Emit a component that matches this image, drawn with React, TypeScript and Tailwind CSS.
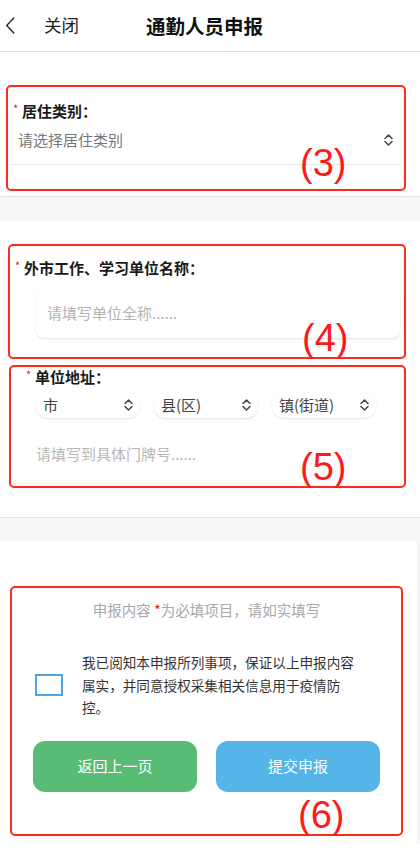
import type {ReactNode} from "react";

const font = {fontFamily: '"Noto Sans CJK SC", "Noto Sans", sans-serif'};

function UpDown({className}: {className?: string}) {
    return (
        <svg viewBox="0 0 11 14" className={className} fill="none" stroke="#444" strokeWidth={1.5}
             strokeLinecap="round" strokeLinejoin="round">
            <path d="M2 5.5 L5.5 2 L9 5.5"/>
            <path d="M2 8.5 L5.5 12 L9 8.5"/>
        </svg>
    );
}

function Mark({children, className}: {children: ReactNode; className: string}) {
    return (
        <span
            className={`absolute text-[38px] leading-none text-[#ff1a1a] ${className}`}
            style={{fontFamily: '"Liberation Sans", Arial, sans-serif'}}>
            {children}
        </span>
    );
}

function Label({children, className}: {children: ReactNode; className?: string}) {
    return (
        <div className={`flex items-start h-[20px] ${className ?? ""}`}>
            <span className="text-[11px] leading-[14px] text-[#e02020] w-[9px]">*</span>
            <span className="text-[15px] leading-[20px] font-bold text-[#1a1a1a]">{children}</span>
        </div>
    );
}

function Pill({text, className}: {text: string; className?: string}) {
    return (
        <div
            className={`flex items-center justify-between w-[104px] h-[26px] pl-[7px] pr-[6px] rounded-xl
            shadow-[0_1px_2px_rgba(0,0,0,0.12)] bg-white ${className ?? ""}`}>
            <span className="text-[15px] text-[#444]">{text}</span>
            <UpDown className="w-[11px] h-[14px]"/>
        </div>
    );
}

export default function App() {
    return (
        <div className="w-[420px] min-h-[866px] bg-white" style={font}>
            {/* header */}
            <div className="flex items-center h-[52px] border-b border-[#e2e2e2]">
                <svg viewBox="0 0 10 18" className="ml-[5px] w-[10px] h-[17px]" fill="none"
                     stroke="#222" strokeWidth={1.4} strokeLinecap="round" strokeLinejoin="round">
                    <path d="M9 1 L1.5 9 L9 17"/>
                </svg>
                <span className="ml-[29px] text-[17.5px] text-[#222]">关闭</span>
                <span className="ml-[67px] text-[19.5px] font-bold text-[#111]">通勤人员申报</span>
            </div>

            {/* section 1 */}
            <div className="pt-[33px] pb-[5px] border-b border-[#e5e5e5]">
                <div className="relative ml-[6px] w-[400px] h-[106px] border-2 border-[#ff2a1a] rounded-[5px]">
                    <Label className="mt-[14px] ml-[5px]">居住类别：</Label>
                    <div className="flex items-center justify-between h-[30px] mt-[4px] ml-[10px] mr-[10px]">
                        <span className="text-[15px] text-[#777]">请选择居住类别</span>
                        <UpDown className="w-[11px] h-[14px]"/>
                    </div>
                    <div className="h-px bg-[#e9e9e9] mt-[9px] mx-[4px]"/>
                    <Mark className="left-[292px] top-[57px]">(3)</Mark>
                </div>
            </div>
            <div className="h-[24px] bg-[#f7f7f7]"/>

            {/* section 2 */}
            <div className="pt-[23px] pb-[29px] border-b border-[#e5e5e5]">
                <div className="relative ml-[8px] w-[398px] h-[115px] border-2 border-[#ff2a1a] rounded-[5px]">
                    <Label className="mt-[12px] ml-[5px]">外市工作、学习单位名称：</Label>
                    <div
                        className="flex items-center h-[50px] mt-[10px] ml-[26px] mr-[4px] pl-[11px] rounded-lg
                        shadow-[0_1px_2px_rgba(0,0,0,0.12)]">
                        <span className="text-[15px] text-[#b3b3b3]">请填写单位全称......</span>
                    </div>
                    <Mark className="left-[292px] top-[73px]">(4)</Mark>
                </div>
                <div className="relative ml-[9px] mt-[6px] w-[397px] h-[123px] border-2 border-[#ff2a1a] rounded-[5px]">
                    <Label className="ml-[15px]">单位地址：</Label>
                    <div className="flex gap-[14px] mt-[5px] ml-[25px]">
                        <Pill text="市"/>
                        <Pill text="县(区)"/>
                        <Pill text="镇(街道)"/>
                    </div>
                    <div className="flex items-center h-[30px] mt-[21px] ml-[25px]">
                        <span className="text-[15px] text-[#b8b8b8]">请填写到具体门牌号......</span>
                    </div>
                    <Mark className="left-[289px] top-[81px]">(5)</Mark>
                </div>
            </div>
            <div className="h-[24px] bg-[#f7f7f7]"/>

            {/* section 3 */}
            <div className="flex bg-[#f7f7f7]">
                <div className="w-[417px] h-[302px] bg-white pt-[44px]">
                    <div className="relative ml-[10px] w-[393px] h-[250px] border-2 border-[#ff2a1a] rounded-[5px]">
                        <div className="mt-[12px] text-center text-[14.5px] leading-[20px] text-[#a8a8a8]">
                            申报内容 <span className="text-[#e02020]">*</span>为必填项目，请如实填写
                        </div>
                        <div className="flex items-center mt-[31px] ml-[23px]">
                            <div className="w-[28px] h-[22px] border-2 border-[#4fa3e8] bg-white shrink-0"/>
                            <p className="ml-[19px] w-[276px] text-[13.6px] leading-[22.5px] text-[#333]">
                                我已阅知本申报所列事项，保证以上申报内容属实，并同意授权采集相关信息用于疫情防控。
                            </p>
                        </div>
                        <div className="flex gap-[19px] mt-[22px] ml-[21px]">
                            <button
                                className="w-[164px] h-[51px] rounded-xl bg-[#59bc75] text-white text-[15px]">
                                返回上一页
                            </button>
                            <button
                                className="w-[164px] h-[51px] rounded-xl bg-[#55b5e8] text-white text-[15px]">
                                提交申报
                            </button>
                        </div>
                        <Mark className="left-[286px] top-[208px]">(6)</Mark>
                    </div>
                </div>
            </div>
        </div>
    );
}
